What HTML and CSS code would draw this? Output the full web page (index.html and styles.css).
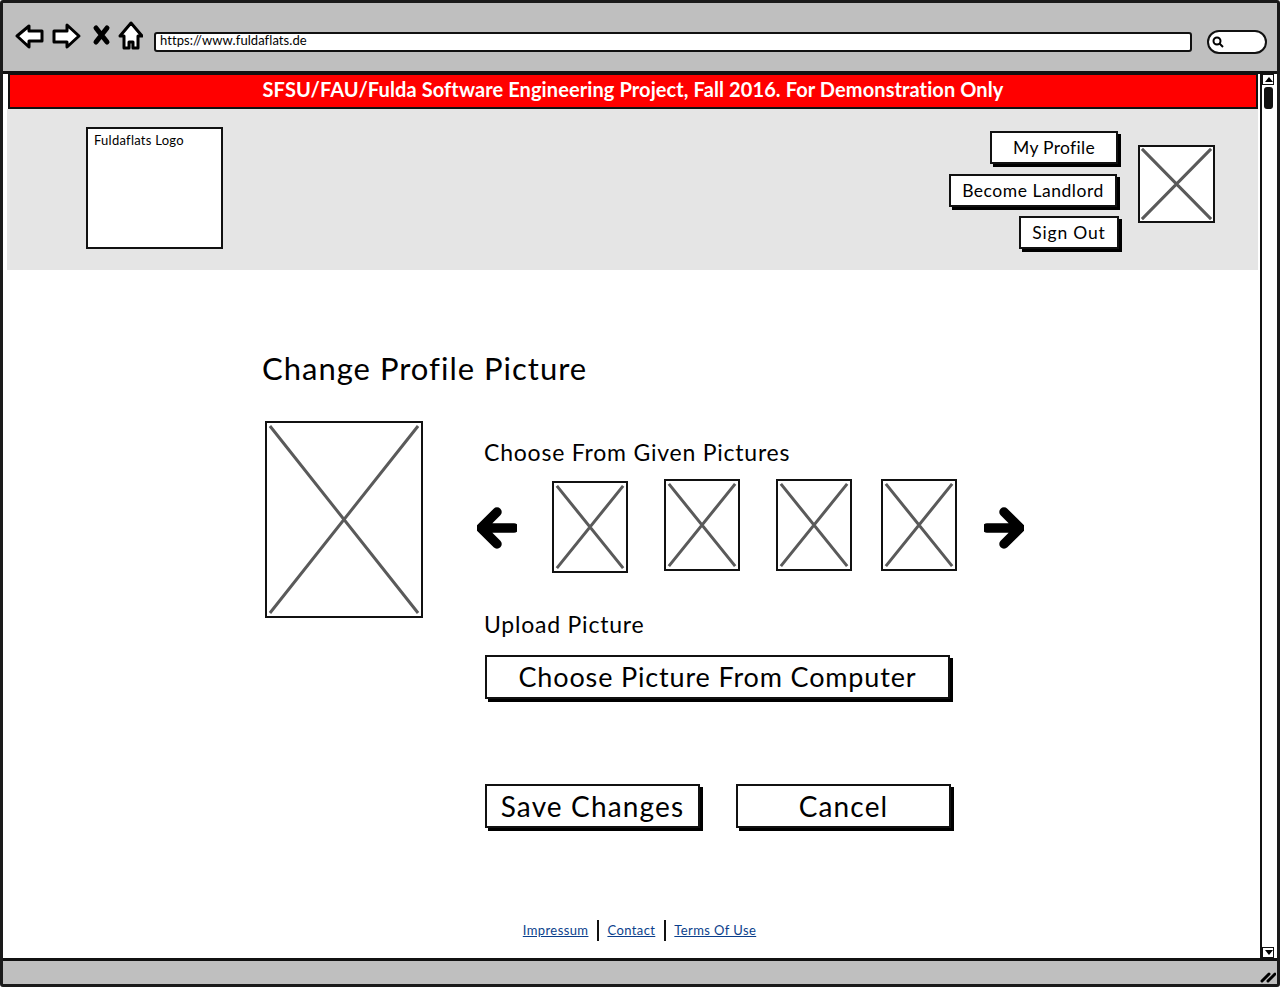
FILE: index.html
```html
<!DOCTYPE html>
<html lang="en">
<head>
<meta charset="utf-8">
<title>Change Profile Picture</title>
<link rel="stylesheet" href="styles.css">
</head>
<body>
<div class="window">
  <div class="toolbar">
    <svg class="nav-icons" width="128" height="30" viewBox="0 0 128 30">
      <path class="nav-shape" d="M2 15 L14 5 L14 10 L27 10 L27 20 L14 20 L14 26 Z"/>
      <path class="nav-shape" d="M39 10 L52 10 L52 4 L64 15 L52 26 L52 21 L39 21 Z"/>
      <path class="nav-x" d="M81 7 L92 21 M92 7 L81 21"/>
      <path class="nav-shape" d="M116 2 L127 15 L123 15 L123 27 L118 27 L118 21 L114 21 L114 27 L109 27 L109 15 L105 15 Z"/>
    </svg>
    <div class="url-box">https://www.fuldaflats.de</div>
    <div class="search-box">
      <svg width="14" height="14" viewBox="0 0 14 14"><circle class="mag" cx="6" cy="6" r="3.5"/><path class="mag" d="M8.5 8.5 L12 12"/></svg>
    </div>
  </div>
  <div class="middle">
    <div class="page">
      <div class="banner">SFSU/FAU/Fulda Software Engineering Project, Fall 2016. For Demonstration Only</div>
      <header class="site-header">
        <div class="logo">Fuldaflats Logo</div>
        <div class="header-right">
          <div class="header-buttons">
            <a class="btn btn-my">My Profile</a>
            <a class="btn btn-land">Become Landlord</a>
            <a class="btn btn-out">Sign Out</a>
          </div>
          <svg class="ph ph-avatar" viewBox="0 0 76 77" preserveAspectRatio="none"><path d="M2 2 L74 75 M74 2 L2 75"/></svg>
        </div>
      </header>
      <main class="content">
        <h1 class="title">Change Profile Picture</h1>
        <div class="editor">
          <svg class="ph ph-large" viewBox="0 0 157 196" preserveAspectRatio="none"><path d="M3 3 L154 193 M154 3 L3 193"/></svg>
          <div class="options">
            <div class="label">Choose From Given Pictures</div>
            <div class="gallery">
              <svg class="arrow arrow-left" width="40" height="42" viewBox="0 0 40 42"><path d="M37 21 L6 21 M20 5 L4 21 L20 37"/></svg>
              <svg class="ph ph-thumb thumb-a" viewBox="0 0 76 91" preserveAspectRatio="none"><path d="M3 3 L73 88 M73 3 L3 88"/></svg>
              <svg class="ph ph-thumb thumb-b" viewBox="0 0 76 91" preserveAspectRatio="none"><path d="M3 3 L73 88 M73 3 L3 88"/></svg>
              <svg class="ph ph-thumb thumb-c" viewBox="0 0 76 91" preserveAspectRatio="none"><path d="M3 3 L73 88 M73 3 L3 88"/></svg>
              <svg class="ph ph-thumb thumb-d" viewBox="0 0 76 91" preserveAspectRatio="none"><path d="M3 3 L73 88 M73 3 L3 88"/></svg>
              <svg class="arrow arrow-right" width="40" height="42" viewBox="0 0 40 42"><path d="M3 21 L34 21 M20 5 L36 21 L20 37"/></svg>
            </div>
            <div class="label label-upload">Upload Picture</div>
            <a class="btn btn-big btn-choose">Choose Picture From Computer</a>
            <div class="actions">
              <a class="btn btn-big btn-save">Save Changes</a>
              <a class="btn btn-big btn-cancel">Cancel</a>
            </div>
          </div>
        </div>
      </main>
      <footer class="footer">
        <a class="foot-link">Impressum</a>
        <a class="foot-link">Contact</a>
        <a class="foot-link">Terms Of Use</a>
      </footer>
    </div>
    <div class="scrollbar">
      <div class="scroll-up"></div>
      <div class="scroll-track"><div class="scroll-thumb"></div></div>
      <div class="scroll-down"></div>
    </div>
  </div>
  <div class="statusbar">
    <svg width="16" height="14" viewBox="0 0 16 14"><path class="grip" d="M2 12 L9 5 M8 12 L15 5"/></svg>
  </div>
</div>
</body>
</html>
```
FILE: styles.css
```css
* { box-sizing: border-box; }
html, body { margin: 0; padding: 0; }
body { width: 1280px; height: 987px; overflow: hidden; background: #fff; font-family: "Lato", "Open Sans", sans-serif; color: #000; }

.window { width: 1280px; height: 987px; border: 3px solid #1a1a1a; border-radius: 3px; display: flex; flex-direction: column; background: #fff; }

.toolbar { height: 71px; flex: none; background: #bfbfbf; border-bottom: 3px solid #111; display: flex; align-items: center; padding: 9px 9px 0 12px; }
.nav-icons { flex: none; margin-right: 11px; margin-top: 9px; align-self: flex-start; }
.nav-shape { fill: #fff; stroke: #000; stroke-width: 3; stroke-linejoin: round; }
.nav-x { fill: none; stroke: #000; stroke-width: 5; stroke-linecap: round; }
.url-box { width: 1038px; height: 20px; flex: none; background: #fff; border: 2.5px solid #111; border-radius: 3px; font-size: 13px; line-height: 13px; padding-left: 4px; letter-spacing: 0.07px; }
.search-box { width: 60px; height: 24px; flex: none; margin-left: 15px; background: #fff; border: 2.5px solid #111; border-radius: 12px; display: flex; align-items: center; padding-left: 2px; }
.mag { fill: none; stroke: #000; stroke-width: 2; }

.middle { flex: 1; display: flex; min-height: 0; }
.page { width: 1257px; flex: none; display: flex; flex-direction: column; padding: 0 2px 0 4px; }
.banner { height: 36px; flex: none; margin-top: -1px; margin-left: 1px; background: #f00; border: 2px solid #111; color: #fff; font-size: 20px; font-weight: 700; text-align: center; line-height: 28px; letter-spacing: 0.1px; }
.site-header { height: 161px; flex: none; background: #e5e5e5; display: flex; justify-content: space-between; padding: 18px 43px 0 79px; }
.logo { width: 137px; height: 122px; background: #fff; border: 2px solid #111; font-size: 13px; line-height: 16px; padding: 3px 6px; letter-spacing: 0.25px; }
.header-right { display: flex; gap: 18px; }
.header-buttons { display: flex; flex-direction: column; align-items: flex-end; gap: 10px; padding-top: 4px; }
.btn { display: block; background: #fff; border: 2px solid #111; box-shadow: 3px 3px 0 #000; text-align: center; }
.btn-my, .btn-land, .btn-out { height: 33px; font-size: 17.5px; line-height: 29px; }
.btn-my { width: 128px; margin-right: 2px; letter-spacing: 0.3px; }
.btn-land { width: 168px; margin-right: 3px; letter-spacing: 0.53px; }
.btn-out { width: 100px; margin-right: 1px; margin-top: -1px; line-height: 30px; letter-spacing: 0.8px; }
.ph { display: block; background: #fff; border: 2px solid #111; flex: none; }
.ph path { stroke: #5a5a5a; stroke-width: 3; fill: none; vector-effect: non-scaling-stroke; }
.ph-avatar { width: 77px; height: 78px; margin-top: 18px; }

.content { flex: 1; padding: 0 0 0 255px; min-height: 0; }
.title { margin: 79px 0 0; font-size: 31px; line-height: 38px; font-weight: 400; letter-spacing: 1px; }
.editor { display: flex; margin-top: 34px; padding-left: 3px; }
.ph-large { width: 158px; height: 197px; }
.options { margin-left: 61px; width: 600px; }
.label { font-size: 23px; line-height: 28px; margin-top: 17px; letter-spacing: 0.78px; }
.gallery { display: flex; align-items: flex-start; margin-top: 13px; margin-left: -7px; }
.arrow path { fill: none; stroke: #000; stroke-width: 9.5; stroke-linecap: round; stroke-linejoin: miter; }
.arrow { flex: none; }
.arrow-left { margin-top: 28px; }
.arrow-right { margin-top: 28px; margin-left: 27px; }
.ph-thumb { width: 76px; height: 92px; }
.thumb-a { margin-left: 35px; margin-top: 2px; }
.thumb-b { margin-left: 36px; }
.thumb-c { margin-left: 36px; }
.thumb-d { margin-left: 29px; }
.label-upload { margin-top: 37px; }
.btn-big { font-size: 27px; line-height: 40px; height: 44px; letter-spacing: 0.85px; }
.btn-choose { width: 465px; margin-top: 17px; margin-left: 1px; }
.actions { display: flex; gap: 36px; margin-top: 85px; margin-left: 1px; }
.btn-save, .btn-cancel { width: 215px; font-size: 28px; letter-spacing: 1.15px; }

.footer { height: 36px; flex: none; display: flex; justify-content: center; align-items: center; padding-left: 14px; margin-bottom: 10px; }
.foot-link { color: #0b3f8c; font-size: 13px; line-height: 21px; text-decoration: underline; padding: 0 8.5px; letter-spacing: 0.4px; border-left: 2px solid #111; }
.foot-link:first-child { border-left: 0; }

.scrollbar { flex: 1; display: flex; flex-direction: column; background: #fff; border-left: 2px solid #111; padding: 0 3px 0 0; }
.scroll-up, .scroll-down { height: 11px; flex: none; position: relative; border: 1px solid #111; }
.scroll-up::after { content: ""; position: absolute; left: 2px; top: 2px; border: 4px solid transparent; border-top: 0; border-bottom: 5px solid #000; }
.scroll-down::after { content: ""; position: absolute; left: 2px; top: 2px; border: 4px solid transparent; border-bottom: 0; border-top: 5px solid #000; }
.scroll-track { flex: 1; }
.scroll-thumb { width: 9px; height: 22px; margin: 2px 0 0 2px; background: #111; border-radius: 3px; }

.statusbar { height: 26px; flex: none; background: #bfbfbf; border-top: 3px solid #111; display: flex; justify-content: flex-end; align-items: flex-end; padding: 0 1px 1px 0; }
.grip { fill: none; stroke: #000; stroke-width: 3; stroke-linecap: round; }
```
